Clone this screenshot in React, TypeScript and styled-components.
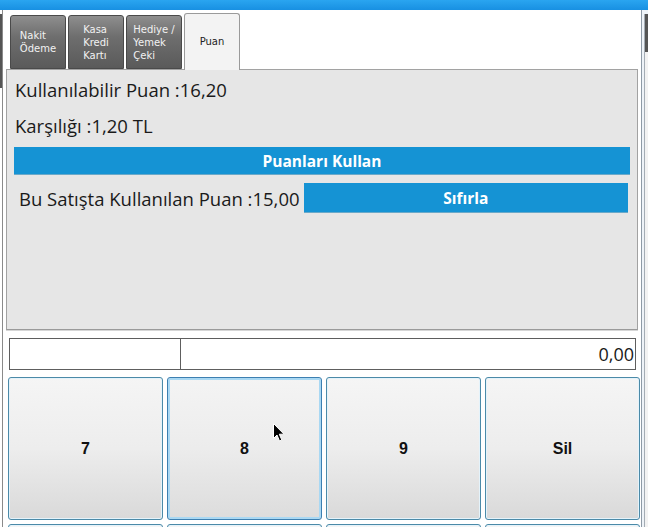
import React from 'react'
import styled, { createGlobalStyle } from 'styled-components'

const GlobalStyle = createGlobalStyle`
  html, body {
    margin: 0;
    padding: 0;
    background: #ffffff;
  }
  * { box-sizing: border-box; }
`

const Page = styled.div`
  position: relative;
  width: 648px;
  height: 527px;
  overflow: hidden;
  background: #fff;
  font-family: 'Open Sans', 'Noto Sans', sans-serif;
`

const TitleBar = styled.div`
  height: 10px;
  background: linear-gradient(to bottom, #2aa5f0, #1890e2);
`

const Frame = styled.div`
  display: flex;
  height: 517px;
`

const LeftRail = styled.div`
  width: 3px;
  flex: none;
  border-right: 1px solid #8a8a8a;
  padding-top: 4px;
`

const RailBlock = styled.div<{ $h: number }>`
  height: ${p => p.$h}px;
  background: #555;
`

const Content = styled.div`
  width: 638px;
  flex: none;
  padding: 3px 0 0 3px;
  display: flex;
  flex-direction: column;
  & > * { flex-shrink: 0; }
`

const RightRail = styled.div`
  flex: 1;
  border-left: 1px solid #8e9aa6;
  padding: 4px 0 0 2px;
  background: #eef3f8;
`

const RightInner = styled.div`
  height: 100%;
  border-left: 1px solid #a4acb4;
  background: #f2f2f2;
`

const TabStrip = styled.div`
  display: flex;
  gap: 2px;
  padding-left: 4px;
  height: 56px;
  align-items: flex-end;
  position: relative;
  z-index: 1;
`

const Tab = styled.div<{ $active?: boolean }>`
  width: 56px;
  height: ${p => (p.$active ? 57 : 54)}px;
  margin-bottom: ${p => (p.$active ? -1 : 0)}px;
  border: 1px solid ${p => (p.$active ? '#9a9a9a' : '#4a4a4a')};
  border-bottom: ${p => (p.$active ? 'none' : '1px solid #4a4a4a')};
  border-radius: 3px 3px 0 0;
  background: ${p =>
    p.$active
      ? '#f3f3f3'
      : 'linear-gradient(to bottom, #8e8e8e 0%, #6e6e6e 40%, #5a5a5a 100%)'};
  color: ${p => (p.$active ? '#222' : '#f2f2f2')};
  font-family: 'DejaVu Sans', 'Liberation Sans', sans-serif;
  font-size: 10px;
  line-height: 13px;
  display: flex;
  align-items: center;
  justify-content: center;
  padding-bottom: ${p => (p.$active ? 2 : 0)}px;
`

const TabLabel = styled.span`
  display: inline-block;
  text-align: left;
  white-space: pre-line;
`

const Panel = styled.div`
  width: 632px;
  height: 261px;
  border: 1px solid #a2a2a2;
  border-bottom-color: #9a9a9a;
  background: #e6e6e6;
  box-shadow: 0 1px 0 #d6d6d6;
  padding: 2px 0 0 0;
  display: flex;
  flex-direction: column;
`

const InfoLine = styled.div`
  height: 36px;
  line-height: 36px;
  padding-left: 8px;
  font-size: 18.5px;
  color: #1a1a1a;
`

const BlueButton = styled.div<{ $h: number }>`
  height: ${p => p.$h}px;
  background: #1593d4;
  border-bottom: 1px solid #6aa9c9;
  color: #fff;
  font-weight: 700;
  font-size: 15.5px;
  display: flex;
  align-items: center;
  justify-content: center;
`

const WideButton = styled(BlueButton)`
  margin: 3px 7px 0 7px;
`

const ResetRow = styled.div`
  display: flex;
  align-items: center;
  gap: 4px;
  margin: 8px 9px 0 12px;
`

const ResetLabel = styled.span`
  font-size: 18.5px;
  color: #1a1a1a;
  white-space: nowrap;
`

const ResetButton = styled(BlueButton)`
  flex: 1;
`

const AmountRow = styled.div`
  display: flex;
  height: 32px;
  margin: 8px 0 0 3px;
  width: 627px;
  border: 1px solid #5e5e5e;
  background: #fff;
`

const AmountCell = styled.div<{ $w?: number }>`
  ${p => (p.$w ? `width: ${p.$w}px; flex: none; border-right: 1px solid #5e5e5e;` : 'flex: 1;')}
  display: flex;
  align-items: center;
  justify-content: flex-end;
  padding-right: 1px;
  font-size: 18px;
  color: #1a1a1a;
`

const Keypad = styled.div`
  display: grid;
  grid-template-columns: repeat(4, 155px);
  grid-auto-rows: 143px;
  gap: 4px;
  margin: 7px 0 0 2px;
`

const Key = styled.div<{ $hover?: boolean }>`
  border: 1px solid ${p => (p.$hover ? '#3c7fb1' : '#4b8aa8')};
  border-radius: 3px;
  background: ${p =>
    p.$hover
      ? 'linear-gradient(to bottom, #f4f4f4 0%, #ececec 50%, #dcdcdc 100%)'
      : 'linear-gradient(to bottom, #f5f5f5 0%, #ededed 50%, #d9d9d9 100%)'};
  box-shadow: inset 0 0 0 ${p => (p.$hover ? '2px #a9d8f3' : '1px #e4f3fb')};
  display: flex;
  align-items: center;
  justify-content: center;
  font-family: 'Liberation Sans', Arial, sans-serif;
  font-weight: 700;
  font-size: 16px;
  color: #111;
`

const Pointer = styled.svg`
  position: absolute;
  left: 273px;
  top: 423px;
  width: 12px;
  height: 19px;
`

const tabs = [
  { label: 'Nakit\nÖdeme' },
  { label: 'Kasa\nKredi\nKartı' },
  { label: 'Hediye /\nYemek\nÇeki' },
  { label: 'Puan', active: true },
]

// second row only peeks in at the bottom edge, its labels are out of view
const keys = ['7', '8', '9', 'Sil', '', '', '', '']

export default function App() {
  return (
    <Page>
      <GlobalStyle />
      <TitleBar />
      <Frame>
        <LeftRail>
          <RailBlock $h={74} />
        </LeftRail>
        <Content>
          <TabStrip>
            {tabs.map(t => (
              <Tab key={t.label} $active={t.active}>
                <TabLabel>{t.label}</TabLabel>
              </Tab>
            ))}
          </TabStrip>
          <Panel>
            <InfoLine>Kullanılabilir Puan :16,20</InfoLine>
            <InfoLine>Karşılığı :1,20 TL</InfoLine>
            <WideButton $h={28}>Puanları Kullan</WideButton>
            <ResetRow>
              <ResetLabel>Bu Satışta Kullanılan Puan :15,00</ResetLabel>
              <ResetButton $h={30}>Sıfırla</ResetButton>
            </ResetRow>
          </Panel>
          <AmountRow>
            <AmountCell $w={171} />
            <AmountCell>0,00</AmountCell>
          </AmountRow>
          <Keypad>
            {keys.map((k, i) => (
              <Key key={i} $hover={k === '8'}>
                {k}
              </Key>
            ))}
          </Keypad>
        </Content>
        <RightRail>
          <RightInner>
            <RailBlock $h={38} />
          </RightInner>
        </RightRail>
      </Frame>
      <Pointer viewBox="0 0 12 19">
        <path d="M0.5 0.5 L0.5 15.5 L4 12 L6.5 18 L8.8 17 L6.3 11.2 L11 11.2 Z" fill="#000" stroke="#fff" strokeWidth="1" />
      </Pointer>
    </Page>
  )
}
